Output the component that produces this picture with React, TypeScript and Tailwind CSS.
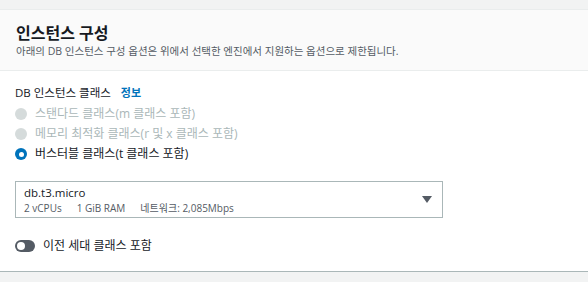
import React, { useState } from "react";

const font = { fontFamily: '"Open Sans", "Noto Sans CJK KR", sans-serif' };

type RadioProps = {
  label: string;
  disabled?: boolean;
  checked?: boolean;
};

const Radio = ({ label, disabled, checked }: RadioProps) => {
  if (disabled) {
    return (
      <div className="flex h-5 items-center">
        <span className="h-3 w-3 rounded-full bg-[#d5dbdb]" />
        <span className="ml-[8px] text-[12px] text-[#aab7b8]">{label}</span>
      </div>
    );
  }
  return (
    <div className="flex h-5 items-center">
      <span className={`flex h-3 w-3 items-center justify-center rounded-full ${checked ? "bg-[#0073bb]" : "border border-[#aab7b8]"}`}>
        {checked && <span className="h-[5px] w-[5px] rounded-full bg-white" />}
      </span>
      <span className="ml-[8px] text-[12px] text-[#16191f]">{label}</span>
    </div>
  );
};

export default function App() {
  const [includePrev, setIncludePrev] = useState(false);

  return (
    <div className="h-[282px] w-[588px] overflow-hidden bg-[#f2f3f3]" style={font}>
      <div className="mt-[9px] border-t border-[#eaeded] bg-white">
        {/* Header */}
        <div className="h-[61px] border-b border-[#eaeded] bg-[#fafafa] px-4 pt-[13px]">
          <h2 className="text-[16px] font-bold leading-[20px] text-[#16191f]">인스턴스 구성</h2>
          <p className="text-[10.5px] leading-[16px] text-[#545b64]">
            아래의 DB 인스턴스 구성 옵션은 위에서 선택한 엔진에서 지원하는 옵션으로 제한됩니다.
          </p>
        </div>

        {/* Body */}
        <div className="h-[201px] border-b border-[#aab7b8] px-[15px] pt-[13px]">
          <div className="flex items-center text-[11.5px] leading-[18px]">
            <span className="text-[#16191f]">DB 인스턴스 클래스</span>
            <a className="ml-[10px] text-[11px] font-bold text-[#0073bb]">정보</a>
          </div>
          <div className="mt-[2px] flex flex-col">
            <Radio label="스탠다드 클래스(m 클래스 포함)" disabled />
            <Radio label="메모리 최적화 클래스(r 및 x 클래스 포함)" disabled />
            <Radio label="버스터블 클래스(t 클래스 포함)" checked />
          </div>

          {/* Select */}
          <div className="mt-[17px] flex h-[37px] w-[428px] items-center border border-[#aab7b8] pl-2 pr-[10px]">
            <div className="flex-1">
              <div className="text-[11.5px] leading-[16px] text-[#16191f]">db.t3.micro</div>
              <div className="flex gap-[15px] text-[10px] leading-[14px] text-[#545b64]">
                <span>2 vCPUs</span>
                <span>1 GiB RAM</span>
                <span>네트워크: 2,085Mbps</span>
              </div>
            </div>
            <svg width="10" height="7" viewBox="0 0 10 7">
              <path d="M0 0 H10 L5 7 Z" fill="#545b64" />
            </svg>
          </div>

          {/* Toggle */}
          <div className="mt-[19px] flex items-center">
            <button
              onClick={() => setIncludePrev(!includePrev)}
              className={`flex h-3 w-5 items-center rounded-full px-[2px] ${includePrev ? "justify-end bg-[#0073bb]" : "bg-[#545b64]"}`}
            >
              <span className="h-2 w-2 rounded-full bg-white" />
            </button>
            <span className="ml-[8px] text-[12px] text-[#16191f]">이전 세대 클래스 포함</span>
          </div>
        </div>
      </div>
    </div>
  );
}
